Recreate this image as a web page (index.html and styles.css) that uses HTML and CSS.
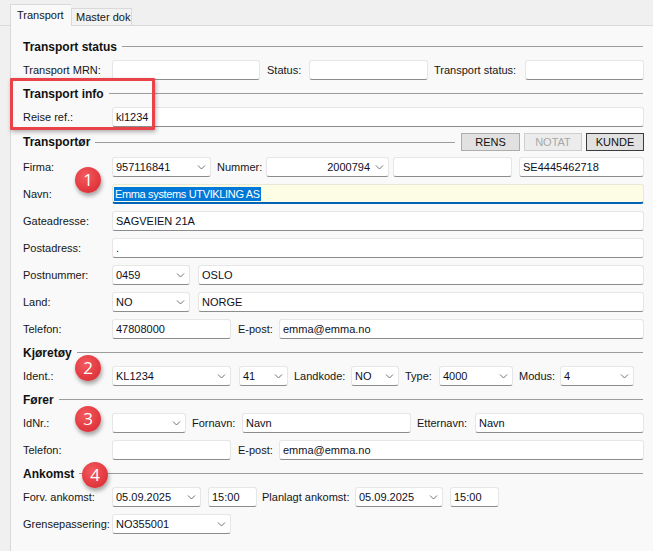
FILE: index.html
```html
<!DOCTYPE html>
<html lang="no">
<head>
<meta charset="utf-8">
<title>Transport</title>
<link rel="stylesheet" href="styles.css">
</head>
<body>
<div class="tabbar">
  <div class="tab active">Transport</div>
  <div class="tab">Master dok</div>
</div>
<div class="panel">
  <div class="hdr"><span>Transport status</span><i class="rule"></i></div>
  <div class="row">
    <span class="lbl">Transport MRN:</span>
    <div class="f w148"></div>
    <span class="il s49 p7">Status:</span>
    <div class="f w119"></div>
    <span class="il s97 p6">Transport status:</span>
    <div class="f grow"></div>
  </div>

  <div class="hdr"><span>Transport info</span><i class="rule"></i></div>
  <div class="row">
    <span class="lbl">Reise ref.:</span>
    <div class="f grow">kl1234</div>
  </div>

  <div class="hdr tall"><span>Transportør</span><i class="rule"></i>
    <div class="btns">
      <div class="btn w59">RENS</div>
      <div class="btn w58 off">NOTAT</div>
      <div class="btn w58 def">KUNDE</div>
    </div>
  </div>
  <div class="row">
    <span class="lbl">Firma:</span>
    <div class="f c w99"><span>957116841</span><svg class="chev" width="9" height="5" viewBox="0 0 9 5"><path d="M1 0.5 L4.5 4 L8 0.5"/></svg></div>
    <span class="il s55 p6">Nummer:</span>
    <div class="f c r w123"><span>2000794</span><svg class="chev" width="9" height="5" viewBox="0 0 9 5"><path d="M1 0.5 L4.5 4 L8 0.5"/></svg></div>
    <div class="f w119 g4"></div>
    <div class="f grow g7">SE4445462718</div>
  </div>
  <div class="row">
    <span class="lbl">Navn:</span>
    <div class="f grow focus"><span class="sel">Emma systems UTVIKLING AS</span></div>
  </div>
  <div class="row">
    <span class="lbl">Gateadresse:</span>
    <div class="f grow">SAGVEIEN 21A</div>
  </div>
  <div class="row">
    <span class="lbl">Postadress:</span>
    <div class="f grow">.</div>
  </div>
  <div class="row">
    <span class="lbl">Postnummer:</span>
    <div class="f c w78"><span>0459</span><svg class="chev" width="9" height="5" viewBox="0 0 9 5"><path d="M1 0.5 L4.5 4 L8 0.5"/></svg></div>
    <div class="f grow g8">OSLO</div>
  </div>
  <div class="row">
    <span class="lbl">Land:</span>
    <div class="f c w78"><span>NO</span><svg class="chev" width="9" height="5" viewBox="0 0 9 5"><path d="M1 0.5 L4.5 4 L8 0.5"/></svg></div>
    <div class="f grow g8">NORGE</div>
  </div>
  <div class="row">
    <span class="lbl">Telefon:</span>
    <div class="f w119">47808000</div>
    <span class="il s48 p7">E-post:</span>
    <div class="f grow">emma@emma.no</div>
  </div>

  <div class="hdr"><span>Kjøretøy</span><i class="rule"></i></div>
  <div class="row">
    <span class="lbl">Ident.:</span>
    <div class="f c w119"><span>KL1234</span><svg class="chev" width="9" height="5" viewBox="0 0 9 5"><path d="M1 0.5 L4.5 4 L8 0.5"/></svg></div>
    <div class="f c w49 g8"><span>41</span><svg class="chev" width="9" height="5" viewBox="0 0 9 5"><path d="M1 0.5 L4.5 4 L8 0.5"/></svg></div>
    <span class="il s63 p6">Landkode:</span>
    <div class="f c w48"><span>NO</span><svg class="chev" width="9" height="5" viewBox="0 0 9 5"><path d="M1 0.5 L4.5 4 L8 0.5"/></svg></div>
    <span class="il s40 p6">Type:</span>
    <div class="f c w74"><span>4000</span><svg class="chev" width="9" height="5" viewBox="0 0 9 5"><path d="M1 0.5 L4.5 4 L8 0.5"/></svg></div>
    <span class="il s47 p6">Modus:</span>
    <div class="f c w74"><span>4</span><svg class="chev" width="9" height="5" viewBox="0 0 9 5"><path d="M1 0.5 L4.5 4 L8 0.5"/></svg></div>
  </div>

  <div class="hdr"><span>Fører</span><i class="rule"></i></div>
  <div class="row">
    <span class="lbl">IdNr.:</span>
    <div class="f c w74"><span></span><svg class="chev" width="9" height="5" viewBox="0 0 9 5"><path d="M1 0.5 L4.5 4 L8 0.5"/></svg></div>
    <span class="il s56 p6">Fornavn:</span>
    <div class="f w169">Navn</div>
    <span class="il s64 p6">Etternavn:</span>
    <div class="f grow">Navn</div>
  </div>
  <div class="row">
    <span class="lbl">Telefon:</span>
    <div class="f w119"></div>
    <span class="il s48 p7">E-post:</span>
    <div class="f grow">emma@emma.no</div>
  </div>

  <div class="hdr"><span>Ankomst</span><i class="rule"></i></div>
  <div class="row">
    <span class="lbl">Forv. ankomst:</span>
    <div class="f c w89"><span>05.09.2025</span><svg class="chev" width="9" height="5" viewBox="0 0 9 5"><path d="M1 0.5 L4.5 4 L8 0.5"/></svg></div>
    <div class="f w49 g7">15:00</div>
    <span class="il s98 p5">Planlagt ankomst:</span>
    <div class="f c w88"><span>05.09.2025</span><svg class="chev" width="9" height="5" viewBox="0 0 9 5"><path d="M1 0.5 L4.5 4 L8 0.5"/></svg></div>
    <div class="f w49 g7">15:00</div>
  </div>
  <div class="row">
    <span class="lbl">Grensepassering:</span>
    <div class="f c w119"><span>NO355001</span><svg class="chev" width="9" height="5" viewBox="0 0 9 5"><path d="M1 0.5 L4.5 4 L8 0.5"/></svg></div>
  </div>
</div>

<div class="callout"></div>
<div class="badge b1">1</div>
<div class="badge b2">2</div>
<div class="badge b3">3</div>
<div class="badge b4">4</div>
</body>
</html>
```
FILE: styles.css
```css
html, body {
  margin: 0;
  padding: 0;
}
body {
  width: 653px;
  height: 551px;
  overflow: hidden;
  position: relative;
  background: #f0f0f0;
  font-family: "Liberation Sans", Arial, sans-serif;
  font-size: 11px;
  color: #161616;
}

/* tabs */
.tabbar {
  height: 26px;
  box-sizing: border-box;
  display: flex;
  align-items: flex-end;
  padding-left: 10px;
  border-bottom: 1px solid #d9d9d9;
}
.tab {
  width: 61px;
  height: 17px;
  box-sizing: border-box;
  padding-left: 4px;
  line-height: 16px;
  border: 1px solid #d9d9d9;
  border-bottom: none;
  background: #f2f2f2;
  white-space: nowrap;
}
.tab.active {
  height: 22px;
  line-height: 20px;
  padding-left: 6px;
  background: #f9f9f9;
  margin-bottom: -1px;
  border-right: none;
  position: relative;
  z-index: 1;
}

/* panel */
.panel {
  margin-left: 10px;
  height: 525px;
  box-sizing: border-box;
  border-left: 1px solid #d9d9d9;
  background: #f9f9f9;
  padding: 14px 9px 0 12px;
  display: flex;
  flex-direction: column;
  gap: 7px;
}

.hdr {
  height: 13px;
  display: flex;
  align-items: center;
  font-weight: bold;
  font-size: 12px;
  color: #111;
}
.hdr.tall {
  height: 16px;
}
.hdr .rule {
  flex: 1;
  height: 0;
  margin-left: 5px;
  margin-right: 1px;
  border-top: 1px solid #9c9c9c;
}

.btns {
  display: flex;
  gap: 4px;
  margin-left: 5px;
  font-weight: normal;
  font-size: 11px;
}
.btn {
  height: 18px;
  box-sizing: border-box;
  border: 1px solid #adadad;
  background: #e1e1e1;
  text-align: center;
  line-height: 16px;
  color: #111;
}
.btn.off {
  color: #a8a8a8;
  border-color: #cfcfcf;
  background: #ececec;
}
.btn.def {
  border-color: #3c3c3c;
}

.row {
  height: 20px;
  display: flex;
  align-items: center;
}
.lbl {
  width: 89px;
  flex: none;
  white-space: nowrap;
}
.il {
  flex: none;
  box-sizing: border-box;
  white-space: nowrap;
}

.f {
  height: 20px;
  box-sizing: border-box;
  flex: none;
  background: #fff;
  border: 1px solid #e6e6e6;
  border-bottom-color: #8c8c8c;
  border-radius: 3px;
  padding: 0 3px;
  display: flex;
  align-items: center;
  white-space: nowrap;
  overflow: hidden;
  color: #0f0f1e;
}
.f.grow {
  flex: 1;
}
.f.c {
  justify-content: space-between;
  padding-right: 4px;
}
.f.c.r {
  justify-content: flex-end;
  gap: 5px;
}
.f.focus {
  background: #fdfde6;
  border-color: #e8e8d8;
  border-bottom: 2px solid #0063b8;
  padding-top: 1px;
  padding-left: 1px;
}
.sel {
  background: #0078d7;
  color: #fff;
  line-height: 14px;
  letter-spacing: -0.35px;
  padding: 0 1px;
}
.chev {
  flex: none;
}
.chev path {
  fill: none;
  stroke: #707070;
  stroke-width: 1;
}

/* widths */
.w48 { width: 48px; }
.w49 { width: 49px; }
.w58 { width: 58px; }
.w59 { width: 59px; }
.w74 { width: 74px; }
.w78 { width: 78px; }
.w88 { width: 88px; }
.w89 { width: 89px; }
.w99 { width: 99px; }
.w119 { width: 119px; }
.w123 { width: 123px; }
.w148 { width: 148px; }
.w169 { width: 169px; }

.s40 { width: 40px; }
.s47 { width: 47px; }
.s48 { width: 48px; }
.s49 { width: 49px; }
.s55 { width: 55px; }
.s56 { width: 56px; }
.s63 { width: 63px; }
.s64 { width: 64px; }
.s97 { width: 97px; }
.s98 { width: 98px; }

.p5 { padding-left: 5px; }
.p6 { padding-left: 6px; }
.p7 { padding-left: 7px; }

.g4 { margin-left: 4px; }
.g7 { margin-left: 7px; }
.g8 { margin-left: 8px; }

/* overlays */
.callout {
  position: absolute;
  left: 10px;
  top: 78px;
  width: 145px;
  height: 52px;
  box-sizing: border-box;
  border: 3px solid #ea4249;
  border-radius: 1px;
  box-shadow: 1px 2px 4px rgba(0, 0, 0, 0.3);
}
.badge {
  position: absolute;
  width: 26px;
  height: 26px;
  border-radius: 50%;
  background: radial-gradient(circle at 40% 35%, #f35a5f 0%, #e23a40 60%, #cf2a31 100%);
  box-shadow: 1px 3px 4px rgba(0, 0, 0, 0.35);
  color: #fff;
  font-family: "Open Sans", "Liberation Sans", sans-serif;
  font-size: 17px;
  line-height: 26px;
  text-align: center;
}
.b1 { left: 75px; top: 167px; }
.b2 { left: 75px; top: 355px; }
.b3 { left: 75px; top: 406px; }
.b4 { left: 82px; top: 462px; }
```
